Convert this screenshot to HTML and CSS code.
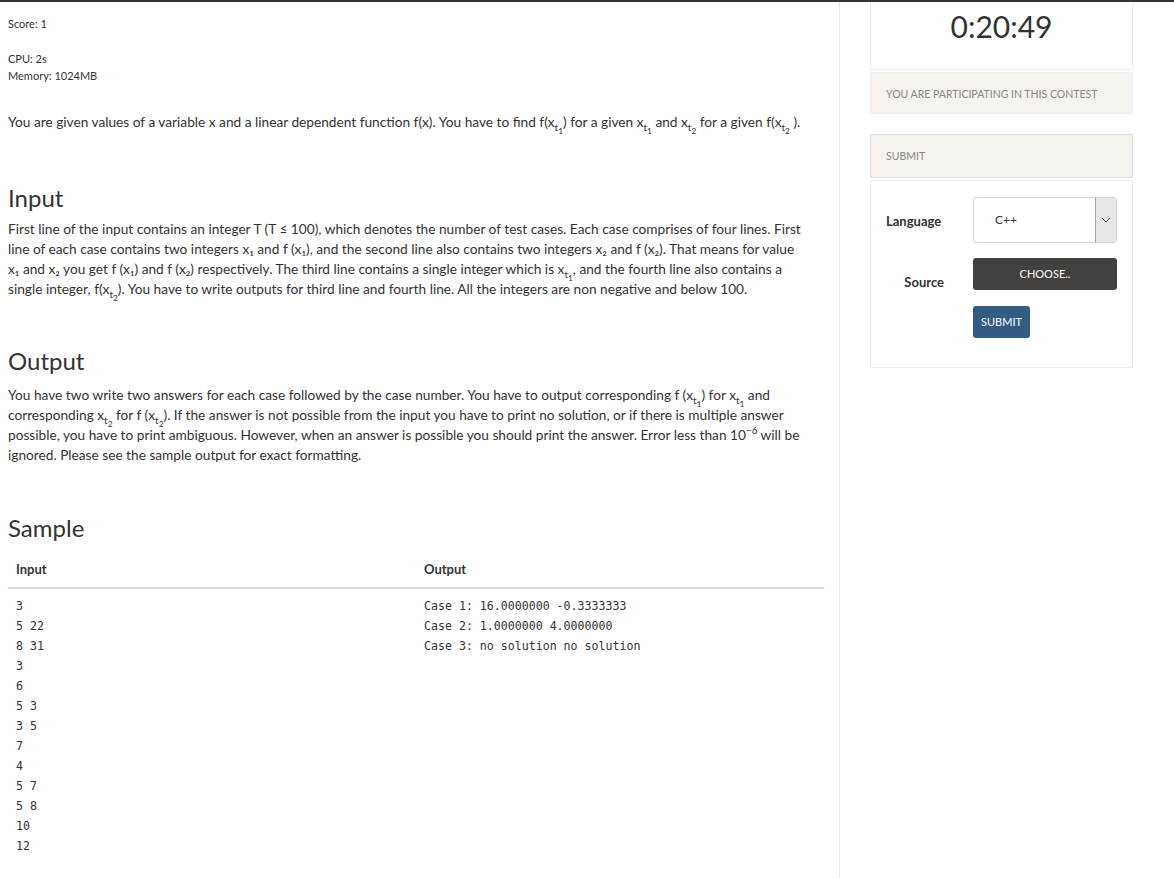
FILE: index.html
```html
<!DOCTYPE html>
<html>
<head>
<meta charset="utf-8">
<link rel="stylesheet" href="styles.css">
</head>
<body>
<div class="page">
  <main class="main">
    <div class="meta">
      <div class="score">Score: 1</div>
      <div class="limits">CPU: 2s<br>Memory: 1024MB</div>
    </div>
    <p class="intro">You are given values of a variable x and a linear dependent function f(x). You have to find f(x<sub>t<sub>1</sub></sub>) for a given x<sub>t<sub>1</sub></sub> and x<sub>t<sub>2</sub></sub> for a given f(x<sub>t<sub>2</sub></sub> ).</p>

    <h2 class="h-input">Input</h2>
    <p class="para">First line of the input contains an integer T (T ≤ 100), which denotes the number of test cases. Each case comprises of four lines. First line of each case contains two integers x₁ and f (x₁), and the second line also contains two integers x₂ and f (x₂). That means for value x₁ and x₂ you get f (x₁) and f (x₂) respectively. The third line contains a single integer which is x<sub>t<sub>1</sub></sub>, and the fourth line also contains a single integer, f(x<sub>t<sub>2</sub></sub>). You have to write outputs for third line and fourth line. All the integers are non negative and below 100.</p>

    <h2 class="h-output">Output</h2>
    <p class="para para-out">You have two write two answers for each case followed by the case number. You have to output corresponding f (x<sub>t<sub>1</sub></sub>) for x<sub>t<sub>1</sub></sub> and corresponding x<sub>t<sub>2</sub></sub> for f (x<sub>t<sub>2</sub></sub>). If the answer is not possible from the input you have to print no solution, or if there is multiple answer possible, you have to print ambiguous. However, when an answer is possible you should print the answer. Error less than 10<sup>−6</sup> will be ignored. Please see the sample output for exact formatting.</p>

    <h2 class="h-sample">Sample</h2>
    <table class="sample">
      <thead>
        <tr><th>Input</th><th>Output</th></tr>
      </thead>
      <tbody>
        <tr>
<td><pre>3
5 22
8 31
3
6
5 3
3 5
7
4
5 7
5 8
10
12</pre></td>
<td><pre>Case 1: 16.0000000 -0.3333333
Case 2: 1.0000000 4.0000000
Case 3: no solution no solution</pre></td>
        </tr>
      </tbody>
    </table>
  </main>

  <aside class="side">
    <div class="timer">0:20:49</div>
    <div class="notice">YOU ARE PARTICIPATING IN THIS CONTEST</div>
    <div class="submit-head">SUBMIT</div>
    <div class="submit-body">
      <div class="row">
        <div class="label lang-label">Language</div>
        <div class="select">
          <span class="select-val">C++</span>
          <span class="select-arrow"><svg width="10" height="6" viewBox="0 0 10 6"><path d="M1 1 L5 5 L9 1" fill="none" stroke="#555" stroke-width="1"/></svg></span>
        </div>
      </div>
      <div class="row row-src">
        <div class="label src-label">Source</div>
        <div class="btns">
          <div class="choose">CHOOSE..</div>
          <div class="submit-btn">SUBMIT</div>
        </div>
      </div>
    </div>
  </aside>
</div>
</body>
</html>
```

FILE: styles.css
```css
html, body {
  margin: 0;
  padding: 0;
  background: #fff;
}
body {
  font-family: "Lato", "Noto Sans", sans-serif;
  color: #333;
  border-top: 2px solid #333;
  height: 876px;
  overflow: hidden;
}
.page {
  display: flex;
  height: 100%;
}
.main {
  width: 804px;
  padding: 0 27px 0 8px;
  border-right: 1px solid #eee;
}
.meta {
  font-size: 11px;
  line-height: 17px;
}
.score {
  padding-top: 13px;
}
.limits {
  margin-top: 18px;
}
.intro {
  font-size: 13.7px;
  line-height: 20px;
  margin: 28px 0 0 0;
}
sub, sup {
  font-size: 72%;
  line-height: 0;
}
sub sub {
  font-size: 85%;
}
h2 {
  font-weight: normal;
  font-size: 24px;
  line-height: 30px;
  margin: 0;
  color: #333;
}
.h-input {
  margin-top: 51px;
}
.h-output {
  margin-top: 47px;
}
.h-sample {
  margin-top: 48px;
}
.para {
  font-size: 13.7px;
  line-height: 20px;
  margin: 6px 9px 0 0;
}
.para.para-out {
  margin-top: 9px;
}
.sample {
  width: 816px;
  border-collapse: collapse;
  margin-top: 9px;
}
.sample th {
  text-align: left;
  font-size: 13px;
  font-weight: bold;
  padding: 8px 8px 9px 8px;
  line-height: 18px;
  border-bottom: 2px solid #e0d8cc;
  width: 50%;
}
.sample td {
  vertical-align: top;
  padding: 7px 8px;
}
pre {
  margin: 0;
  font-family: "DejaVu Sans Mono", monospace;
  font-size: 11.6px;
  line-height: 20px;
  color: #333;
}
.side {
  margin-left: 30px;
  width: 263px;
}
.timer {
  border: 1px solid #eee;
  border-top: none;
  height: 67px;
  text-align: center;
  font-size: 30px;
  line-height: 49px;
  color: #333;
}
.notice {
  margin-top: 2px;
  background: #f6f3ef;
  border: 1px solid #eee;
  border-radius: 2px;
  height: 42px;
  box-sizing: border-box;
  padding-left: 15px;
  font-size: 10.5px;
  line-height: 42px;
  color: #888;
}
.submit-head {
  margin-top: 20px;
  background: #f6f3ef;
  border: 1px solid #ddd;
  border-radius: 2px;
  height: 44px;
  box-sizing: border-box;
  padding-left: 15px;
  font-size: 10.5px;
  line-height: 42px;
  color: #888;
}
.submit-body {
  margin-top: 2px;
  border: 1px solid #eee;
  height: 188px;
  box-sizing: border-box;
  padding: 16px 15px 0 0;
}
.row {
  display: flex;
  align-items: center;
}
.label {
  width: 73px;
  text-align: right;
  font-size: 13px;
  font-weight: bold;
  color: #333;
  margin-right: 29px;
}
.lang-label {
  text-align: left;
  padding-left: 15px;
  width: 58px;
  padding-top: 2px;
}
.row-src {
  align-items: flex-start;
  margin-top: 15px;
}
.src-label {
  padding-top: 16px;
}
.select {
  width: 144px;
  height: 46px;
  box-sizing: border-box;
  border: 1px solid #ddd5c9;
  border-radius: 3px;
  display: flex;
  background: #fff;
}
.select-val {
  flex: 1;
  padding-left: 21px;
  font-size: 12px;
  line-height: 44px;
}
.select-arrow {
  width: 20px;
  background: #e6e6e6;
  border-left: 1px solid #aaa;
  display: flex;
  align-items: center;
  justify-content: center;
  border-radius: 0 3px 3px 0;
}
.btns {
  display: flex;
  flex-direction: column;
  align-items: flex-start;
}
.choose {
  width: 144px;
  height: 32px;
  background: #42413d;
  color: #fff;
  border-radius: 3px;
  text-align: center;
  font-size: 11px;
  line-height: 32px;
}
.submit-btn {
  margin-top: 16px;
  width: 57px;
  height: 32px;
  background: #335c85;
  color: #fff;
  border-radius: 3px;
  text-align: center;
  font-size: 11px;
  line-height: 32px;
}
```
